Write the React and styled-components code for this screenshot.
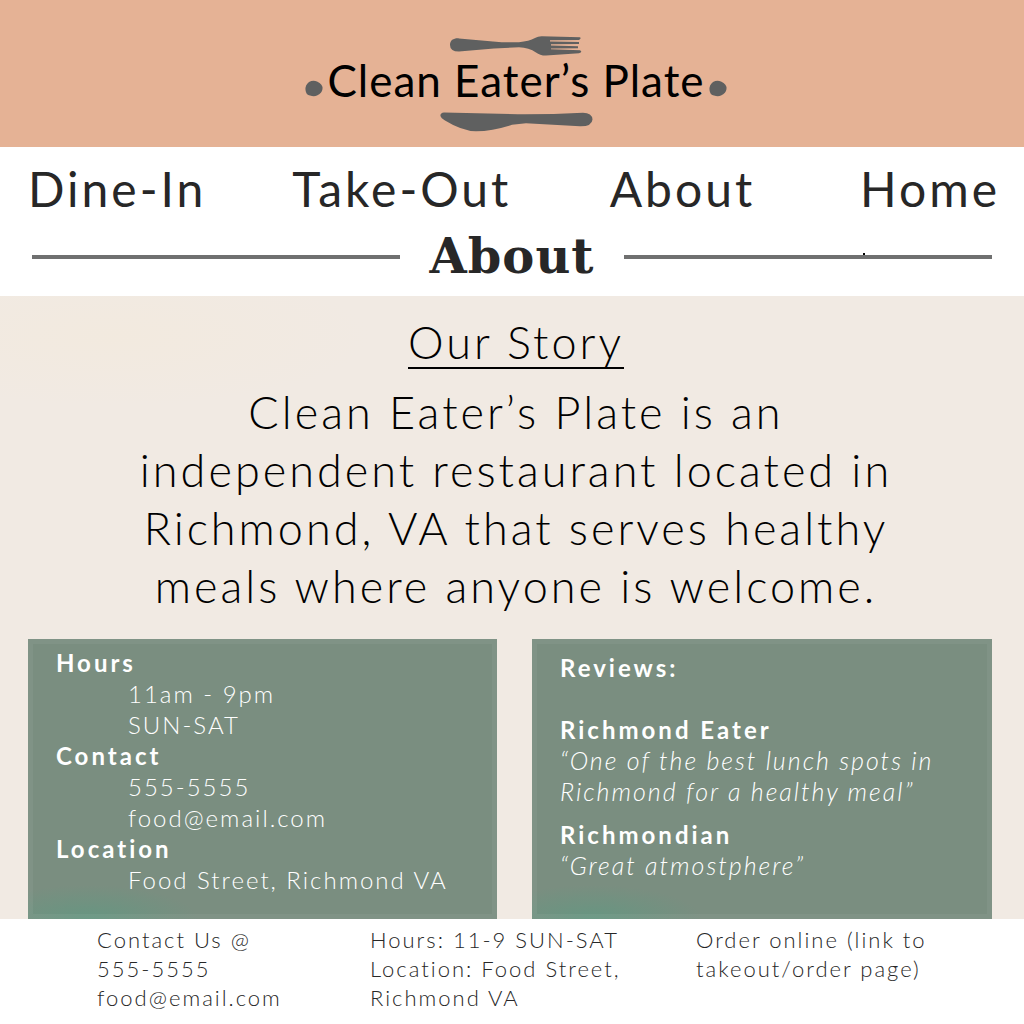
import React from "react";
import styled, { createGlobalStyle } from "styled-components";

const GlobalStyle = createGlobalStyle`
  * { box-sizing: border-box; }
  body {
    margin: 0;
    background: #fff;
    color: #272727;
    font-family: Lato, "Open Sans", sans-serif;
    font-weight: 300;
  }
  h1, h2, h3, p, dl, dd, ul { margin: 0; padding: 0; }
  a { color: inherit; text-decoration: none; }
`;

const Header = styled.header`
  display: flex;
  flex-direction: column;
  align-items: center;
  padding: 36px 16px 15px 24px;
  background: #e5b295;
`;

const Brand = styled.h1`
  display: flex;
  align-items: baseline;
  gap: 4px;
  padding-bottom: 8px;
  color: #000;
  font-size: 44px;
  line-height: 48px;
  font-weight: 400;
  letter-spacing: 1px;
  white-space: nowrap;
`;

const Drawing = styled.svg`
  display: block;
  fill: #5f6060;
`;

const Masthead = styled.div`
  padding: 12px 0 5px;
`;

const Nav = styled.nav`
  padding: 0 24px 0 28px;
`;

const NavList = styled.ul`
  display: grid;
  grid-template-columns: 264fr 317fr 250fr auto;
  list-style: none;
  font-size: 48px;
  line-height: 60px;
  font-weight: 400;
  letter-spacing: 3px;
  white-space: nowrap;
`;

const TitleRow = styled.div`
  display: flex;
  align-items: center;
  gap: 30px;
  padding: 3px 32px 0;
`;

const Rule = styled.span`
  position: relative;
  flex: 1;
  height: 4px;
  background: #6f7070;
`;

const Speck = styled.i`
  position: absolute;
  left: 65%;
  bottom: 100%;
  width: 2px;
  height: 2px;
  background: #000;
`;

const Title = styled.h2`
  font-family: "DejaVu Serif", serif;
  font-weight: 700;
  font-size: 48px;
  line-height: 69px;
  letter-spacing: 1px;
`;

const Main = styled.main`
  padding: 17px 32px 0 28px;
  background:
    radial-gradient(ellipse 260px 70px at 110px 40px, rgba(243, 234, 220, 0.6), transparent),
    #f1eae3;
`;

const Story = styled.section`
  max-width: 800px;
  margin: 0 auto;
  padding: 0 0 24px 12px;
  color: #000;
  text-align: center;
  font-size: 45px;
  line-height: 58px;
  letter-spacing: 3px;
`;

const StoryTitle = styled.h2`
  display: inline-block;
  margin-bottom: 14px;
  border-bottom: 2px solid #000;
  font: inherit;
  line-height: 50px;
`;

const Panels = styled.div`
  display: grid;
  grid-template-columns: 469fr 460fr;
  gap: 35px;
`;

const Panel = styled.section`
  padding: ${(p) => p.$top}px 28px 24px;
  color: #fff;
  background:
    radial-gradient(ellipse 110px 34px at 60px 100%, rgba(90, 155, 130, 0.6), transparent),
    #7a8e80;
  box-shadow: inset 0 0 0 5px rgba(255, 255, 255, 0.05);
  font-size: 24px;
  line-height: 31px;
  letter-spacing: 2px;
`;

const Term = styled.dt`
  font-weight: 700;
  letter-spacing: 3px;
`;

const Detail = styled.dd`
  && { margin-left: 72px; }
`;

const PanelTitle = styled.h3`
  font-size: inherit;
  font-weight: 700;
  letter-spacing: 3px;
`;

const Review = styled.article`
  margin-top: ${(p) => p.$gap}px;
`;

const Quote = styled.p`
  font-size: 25px;
  font-style: italic;
`;

const Footer = styled.footer`
  display: grid;
  grid-template-columns: 273fr 326fr 328fr;
  padding: 6px 0 13px 97px;
  font-size: 22px;
  line-height: 29px;
  letter-spacing: 2px;
`;

const Line = styled.span`
  display: block;
`;

const Fork = () => (
  <Drawing width="134" height="20" viewBox="0 0 134 20" aria-hidden="true">
    <path d="M1 9C1 4 5 2 10 2.4L44 5.4Q58 6.7 70 6.2Q80 5.6 86 2.1Q89 .2 93 .3L131 1.2Q132.600 2.6 130 4L101 4.300V5.600L130 6V8L102 8.300V9.600L129 10.200V12.200L102 12.600V13.300L131 14.200Q134 16 130 17.300L97 19.600Q91 19.700 87 16.500Q80 11.500 70 11.300L45 12.500L10 15.600Q1 15.500 1 9Z" />
  </Drawing>
);

const Knife = () => (
  <Drawing width="153" height="20" viewBox="0 0 153 20" aria-hidden="true">
    <path d="M4 .5Q0 1 .5 4Q1 6 5 8.500Q22 19 36 19.300Q53 19 72 12.800L86 11.300L140 14.300Q152 14.500 152.500 7.500Q152 1 143 .8Q110 2.500 78 2.300Z" />
  </Drawing>
);

const Pea = () => (
  <Drawing width="18" height="17" viewBox="0 0 18 17" aria-hidden="true">
    <path d="M4 2Q8 0 12 1.500Q18 4 17.500 9Q17 13 12 15.500Q9 17 5 15.500Q1 15 .5 10Q0 5 4 2Z" />
  </Drawing>
);

const links = ["Dine-In", "Take-Out", "About", "Home"];

const info = [
  { term: "Hours", details: ["11am - 9pm", "SUN-SAT"] },
  { term: "Contact", details: ["555-5555", "food@email.com"] },
  { term: "Location", details: ["Food Street, Richmond VA"] },
];

const reviews = [
  { name: "Richmond Eater", text: "“One of the best lunch spots in Richmond for a healthy meal”", gap: 31 },
  { name: "Richmondian", text: "“Great atmostphere”", gap: 12 },
];

const footer = [
  ["Contact Us @", "555-5555", "food@email.com"],
  ["Hours: 11-9 SUN-SAT", "Location: Food Street,", "Richmond VA"],
];

export default function App() {
  return (
    <>
      <GlobalStyle />
      <Header>
        <Fork />
        <Brand>
          <Pea />
          Clean Eater’s Plate
          <Pea />
        </Brand>
        <Knife />
      </Header>
      <Masthead>
        <Nav>
          <NavList>
            {links.map((label) => (
              <li key={label}>
                <a href={"#" + label.toLowerCase()}>{label}</a>
              </li>
            ))}
          </NavList>
        </Nav>
        <TitleRow>
          <Rule />
          <Title>About</Title>
          <Rule>
            <Speck />
          </Rule>
        </TitleRow>
      </Masthead>
      <Main>
        <Story>
          <StoryTitle>Our Story</StoryTitle>
          <p>
            Clean Eater’s Plate is an independent restaurant located in Richmond,
            VA that serves healthy meals where anyone is welcome.
          </p>
        </Story>
        <Panels>
          <Panel $top={8}>
            <dl>
              {info.map(({ term, details }) => (
                <React.Fragment key={term}>
                  <Term>{term}</Term>
                  {details.map((d) => (
                    <Detail key={d}>{d}</Detail>
                  ))}
                </React.Fragment>
              ))}
            </dl>
          </Panel>
          <Panel $top={13}>
            <PanelTitle>Reviews:</PanelTitle>
            {reviews.map(({ name, text, gap }) => (
              <Review key={name} $gap={gap}>
                <PanelTitle>{name}</PanelTitle>
                <Quote>{text}</Quote>
              </Review>
            ))}
          </Panel>
        </Panels>
      </Main>
      <Footer>
        {footer.map((lines) => (
          <p key={lines[0]}>
            {lines.map((line) => (
              <Line key={line}>{line}</Line>
            ))}
          </p>
        ))}
        <p>
          <a href="#order">
            <Line>Order online (link to</Line>
            <Line>takeout/order page)</Line>
          </a>
        </p>
      </Footer>
    </>
  );
}
